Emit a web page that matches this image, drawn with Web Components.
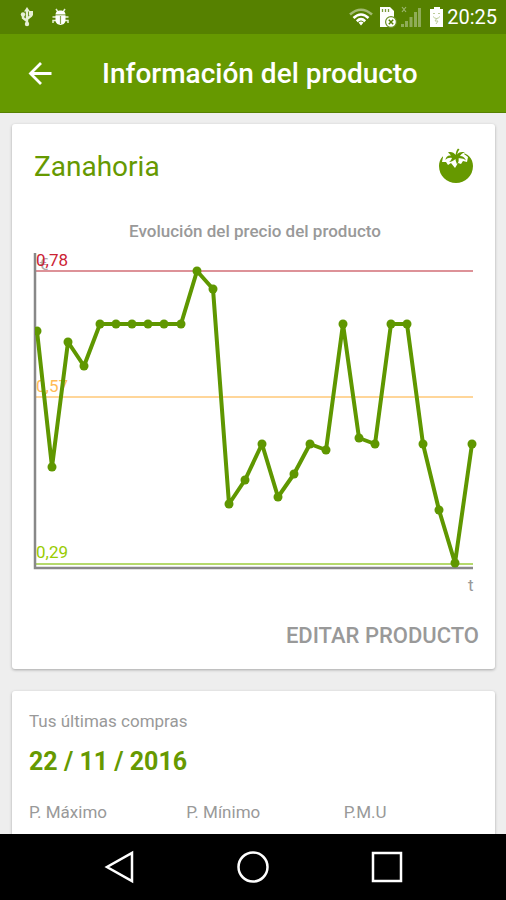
<!DOCTYPE html>
<html lang="es">
<head>
	<meta charset="utf-8">
	<meta name="viewport" content="width=device-width, initial-scale=1">
	<title>Información del producto</title>
	<style type="text/css">
		html, body {
			height: 100%;
		}
		body {
			margin: 0;
			display: flex;
			flex-direction: column;
			background: #eee;
			color: #999;
			font-family: Roboto, "Noto Sans", sans-serif;
			--green: #669900;
			--green-dark: #568100;
		}
		main {
			flex: 1;
			min-height: 0;
			overflow: hidden;
			display: flex;
			flex-direction: column;
			gap: 22px;
			padding: 11px 11px 0 12px;
		}
	</style>
</head>
<body>
	<status-bar>20:25</status-bar>
	<app-bar>Información del producto</app-bar>
	<main>
		<product-card name="Zanahoria">
			<price-chart label="Evolución del precio del producto"></price-chart>
		</product-card>
		<purchase-card date="22 / 11 / 2016">
			<span slot="title">Tus últimas compras</span>
			<span>P. Máximo</span>
			<span>P. Mínimo</span>
			<span>P.M.U</span>
		</purchase-card>
	</main>
	<nav-bar></nav-bar>

	<script>
	customElements.define('status-bar', class extends HTMLElement {
	  connectedCallback() {
	    this.attachShadow({mode: 'open'});
	    this.shadowRoot.innerHTML = `
	    	<style>
	    		:host {
	    			display: flex;
	    			flex: none;
	    			align-items: center;
	    			justify-content: space-between;
	    			height: 34px;
	    			padding: 0 9px 0 20px;
	    			background: var(--green-dark);
	    			color: #fff;
	    			font-size: 20px;
	    			line-height: 36px;
	    		}
	    		div {
	    			display: flex;
	    			align-items: center;
	    		}
	    		.left { gap: 18px; }
	    		.icons { gap: 4px; }
	    		svg { display: block; }
	    	</style>
	    	<div class="left">
	    		<!-- usb -->
	    		<svg width="14" height="20" viewBox="0 0 14 20" fill="#e6efd5" stroke="#e6efd5">
	    			<path d="M7 4v13M7 14L3 11V7M7 12l4-3V6" fill="none" stroke-width="2.400"/>
	    			<path d="M7 0l3 4.500H4z" stroke="none"/>
	    			<circle cx="3" cy="7.500" r="2.200" stroke="none"/>
	    			<path d="M9 4h4v4.600H9z" stroke="none"/>
	    			<circle cx="7" cy="17" r="2.200" stroke="none"/>
	    		</svg>
	    		<!-- debug bug -->
	    		<svg width="17" height="18" viewBox="0 0 17 18">
	    			<path d="M4 1l2 3M13 1l-2 3M4 9H.500M13 9h3.500M4 12.500H1V15M13 12.500h3V15" fill="none" stroke="#e6efd5" stroke-width="1.500"/>
	    			<path d="M3.500 6.500C3.500 1 13.500 1 13.500 6.500z" fill="#fff"/>
	    			<path d="M3.500 7.300h10v4.700c0 6.500-10 6.500-10 0z" fill="#fff"/>
	    			<path d="M8.500 8v8" stroke="#8ca652" stroke-width="1.200"/>
	    		</svg>
	    	</div>
	    	<div>
	    		<div class="icons">
	    			<!-- wifi -->
	    			<svg width="26" height="20" viewBox="0 0 26 20" fill="none" stroke-width="2.600">
	    				<path d="M1 7.500Q12-2 23 7.500" stroke="#a3bb73"/>
	    				<path d="M4.500 11q7.500-7 15 0" stroke="#fff"/>
	    				<path d="M7.800 14.200q4.200-4 8.400 0" stroke="#fff"/>
	    				<path d="M9.500 15.500q2.500-2 5 0L12 18.500z" fill="#fff" stroke="none"/>
	    			</svg>
	    			<!-- sim error -->
	    			<svg width="18" height="22" viewBox="0 0 18 22">
	    				<path d="M1 1h10l4 4v16H1z" fill="#fff"/>
	    				<path d="M3.500 3v3M6.500 3v3M9.500 3v3" stroke="#7b9a3c" stroke-width="1.300"/>
	    				<circle cx="12" cy="16" r="5.400" fill="#fff" stroke="#6a8f22" stroke-width="1.200"/>
	    				<path d="M9.800 13.800l4.400 4.400M14.200 13.800l-4.400 4.400" stroke="#568100" stroke-width="1.500"/>
	    			</svg>
	    			<!-- signal -->
	    			<svg width="22" height="22" viewBox="0 0 22 22">
	    				<path d="M0 18h3v3H0zM4 15h3v6H4zM8.500 11h3v10h-3zM13 6h3v15h-3zM17 2h3v19h-3z" fill="#8fac58"/>
	    				<path d="M1 1l4 5M5 1L1 6" stroke="#9db670" stroke-width="1.200"/>
	    			</svg>
	    			<!-- battery -->
	    			<svg width="20" height="22" viewBox="0 0 20 22">
	    				<path d="M7 1h6v2h3v18H3V3h4z" fill="#fff"/>
	    				<path d="M6 7.500h2M11 7.500h2M6 10.500q3.500 4 7 0M10 12l-2 3h3l-2 3" fill="none" stroke="#bccc99" stroke-width="1"/>
	    			</svg>
	    		</div>
	    		<slot></slot>
	    	</div>
	    `;
	  }
	});

	customElements.define('app-bar', class extends HTMLElement {
	  connectedCallback() {
	    this.attachShadow({mode: 'open'});
	    this.shadowRoot.innerHTML = `
	    	<style>
	    		:host {
	    			display: flex;
	    			flex: none;
	    			align-items: center;
	    			gap: 46px;
	    			height: 79px;
	    			padding: 2px 24px 0;
	    			box-sizing: border-box;
	    			border-bottom: 1px solid var(--green-dark);
	    			background: var(--green);
	    			color: #fff;
	    		}
	    		button {
	    			padding: 0;
	    			border: 0;
	    			background: none;
	    			color: inherit;
	    		}
	    		svg { display: block; }
	    		h1 {
	    			margin: 0;
	    			font-size: 28px;
	    			font-weight: 500;
	    			line-height: 32px;
	    			white-space: nowrap;
	    		}
	    	</style>
	    	<button aria-label="Volver">
	    		<svg width="32" height="32" viewBox="0 0 32 32" fill="none" stroke="currentColor" stroke-width="2.800">
	    			<path d="M27.500 15.500H7M17 5L6.500 15.500 17 26"/>
	    		</svg>
	    	</button>
	    	<h1><slot></slot></h1>
	    `;
	  }
	});

	// white sheet shared by all the cards
	customElements.define('base-card', class extends HTMLElement {
	  connectedCallback() {
	    this.attachShadow({mode: 'open'});
	    this.shadowRoot.innerHTML = `
	    	<style>
	    		:host {
	    			display: block;
	    			border-radius: 3px;
	    			background: #fff;
	    			box-shadow: 0 1px 3px rgba(0, 0, 0, .3);
	    		}
	    	</style>
	    	<slot></slot>
	    `;
	  }
	});

	customElements.define('product-card', class extends HTMLElement {
	  connectedCallback() {
	    this.attachShadow({mode: 'open'});
	    this.shadowRoot.innerHTML = `
	    	<style>
	    		:host {
	    			display: block;
	    			flex: none;
	    		}
	    		header {
	    			display: flex;
	    			align-items: center;
	    			justify-content: space-between;
	    			padding: 22px 20px 0 22px;
	    		}
	    		h2 {
	    			margin: 0;
	    			color: var(--green);
	    			font-size: 28px;
	    			font-weight: 400;
	    			line-height: 42px;
	    		}
	    		footer {
	    			display: flex;
	    			justify-content: flex-end;
	    			padding: 16px 16px 17px 0;
	    		}
	    		button {
	    			padding: 0;
	    			border: 0;
	    			background: none;
	    			color: #999;
	    			font: 500 22px/32px Roboto, "Noto Sans", sans-serif;
	    			text-transform: uppercase;
	    		}
	    	</style>
	    	<base-card>
	    		<header>
	    			<h2>${this.getAttribute('name')}</h2>
	    			<svg width="38" height="38" viewBox="0 0 38 38">
	    				<path d="M19 5C8 3 2 10 2 18c0 10 8 17 17 17s17-7 17-17C36 10 30 3 19 5z" fill="#669900"/>
	    				<path d="M10 4l5 0 4-2 4 2 5 0-1 2 4 3-1 5-4-1-2 3-3-1-3 5-4-5-3 2-2-3-4 0 1-5-2-4 4-1z" fill="#fff"/>
	    				<path d="M11 4.500c3-1 6 0 7.500 2.500.5-3 1-5 2.500-6.500l1.500 1C21 3 20.500 5 20.300 6.500 22 4 25 3.500 28 4.500c-2 0-3.500 1.500-5 3.500 3 0 5 2 6 4.500-2-1.500-5-2.500-7.500-2 .5 2 0 4-1.500 6-.5-2-1.500-3.500-1.500-5.500-1.500 1.500-4 3-6.500 3 1.500-1 2.500-2.500 3-4-2.500-.5-5 0-6.500 2 0-3 2.500-5 5.500-4.500-1-1.500-2-2.500-3-3z" fill="#669900"/>
	    			</svg>
	    		</header>
	    		<slot></slot>
	    		<footer><button>Editar producto</button></footer>
	    	</base-card>
	    `;
	  }
	});

	customElements.define('price-chart', class extends HTMLElement {
	  connectedCallback() {
	    const points = [
	      [4, 81], [19, 217], [35, 92], [51, 116], [67, 74], [83, 74], [99, 74],
	      [115, 74], [131, 74], [148, 74], [164, 21], [180, 39], [196, 254],
	      [212, 230], [229, 194], [245, 247], [261, 224], [277, 194], [293, 200],
	      [310, 74], [326, 188], [342, 194], [358, 74], [374, 74], [390, 194],
	      [406, 260], [422, 313], [439, 194]
	    ];
	    const dots = points.map(([x, y]) => `<circle cx="${x}" cy="${y}" r="4.500"/>`).join('');
	    this.attachShadow({mode: 'open'});
	    this.shadowRoot.innerHTML = `
	    	<style>
	    		:host {
	    			display: block;
	    			padding: 32px 18px 0 21px;
	    			text-align: center;
	    		}
	    		h3 {
	    			margin: 0 0 8px;
	    			font-size: 17px;
	    			font-weight: 500;
	    			line-height: 22px;
	    		}
	    		svg {
	    			display: block;
	    			width: 100%;
	    		}
	    		text {
	    			font-size: 17px;
	    		}
	    	</style>
	    	<h3>${this.getAttribute('label')}</h3>
	    	<svg viewBox="0 0 444 354">
	    		<defs><clipPath id="plot"><path d="M2 0h442v330H2z"/></clipPath></defs>
	    		<text x="6" y="20" fill="#aaa">€</text>
	    		<text x="435" y="341" fill="#999">t</text>
	    		<text x="3" y="16" fill="#cc2233">0,78</text>
	    		<text x="3" y="142" fill="#ffbb55">0,57</text>
	    		<text x="3" y="308" fill="#99cc00">0,29</text>
	    		<path d="M2 21h438" stroke="#dd9298" stroke-width="2"/>
	    		<path d="M2 147h438" stroke="#ffd699" stroke-width="2"/>
	    		<path d="M2 314h438" stroke="#b5d96c" stroke-width="2"/>
	    		<path d="M2 3v315h438" fill="none" stroke="#888" stroke-width="2.500"/>
	    		<g clip-path="url(#plot)" fill="#5f9700">
	    			<polyline points="${points.join(' ')}" fill="none" stroke="#5f9700" stroke-width="4" stroke-linejoin="round"/>
	    			${dots}
	    		</g>
	    	</svg>
	    `;
	  }
	});

	customElements.define('purchase-card', class extends HTMLElement {
	  connectedCallback() {
	    this.attachShadow({mode: 'open'});
	    this.shadowRoot.innerHTML = `
	    	<style>
	    		:host {
	    			display: block;
	    			flex: none;
	    			font-size: 17px;
	    			line-height: 22px;
	    		}
	    		section {
	    			padding: 19px 0 34px 17px;
	    		}
	    		h2 {
	    			margin: 0;
	    			font-size: inherit;
	    			font-weight: 400;
	    		}
	    		time {
	    			display: block;
	    			margin: 14px 0 23px;
	    			color: var(--green);
	    			font-size: 25px;
	    			font-weight: 700;
	    			line-height: 32px;
	    		}
	    		.prices {
	    			display: grid;
	    			grid-template-columns: repeat(3, 1fr);
	    			column-gap: 6px;
	    		}
	    	</style>
	    	<base-card>
	    		<section>
	    			<h2><slot name="title"></slot></h2>
	    			<time datetime="2016-11-22">${this.getAttribute('date')}</time>
	    			<div class="prices"><slot></slot></div>
	    		</section>
	    	</base-card>
	    `;
	  }
	});

	customElements.define('nav-bar', class extends HTMLElement {
	  connectedCallback() {
	    this.attachShadow({mode: 'open'});
	    this.shadowRoot.innerHTML = `
	    	<style>
	    		:host {
	    			display: flex;
	    			flex: none;
	    			align-items: center;
	    			justify-content: center;
	    			gap: 98px;
	    			height: 66px;
	    			background: #000;
	    		}
	    		button {
	    			padding: 0;
	    			border: 0;
	    			background: none;
	    		}
	    		svg {
	    			display: block;
	    			fill: none;
	    			stroke: #fff;
	    			stroke-width: 2.500;
	    		}
	    	</style>
	    	<button aria-label="Atrás"><svg width="36" height="36" viewBox="0 0 36 36"><path d="M31 4v28L6 18z"/></svg></button>
	    	<button aria-label="Inicio"><svg width="36" height="36" viewBox="0 0 36 36"><circle cx="18" cy="18" r="14.500"/></svg></button>
	    	<button aria-label="Recientes"><svg width="36" height="36" viewBox="0 0 36 36"><path d="M4 4h28v28H4z"/></svg></button>
	    `;
	  }
	});
	</script>
</body>
</html>
